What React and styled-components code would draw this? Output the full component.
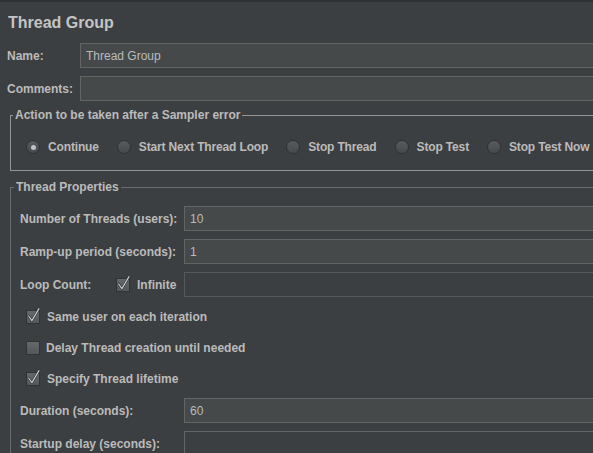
import React from "react";
import styled, { createGlobalStyle } from "styled-components";

const GlobalStyle = createGlobalStyle`
  html, body {
    margin: 0;
    padding: 0;
    background: #3c3f41;
    overflow: hidden;
  }
  body {
    font-family: "Liberation Sans", Arial, sans-serif;
    color: #bbbbbb;
  }
`;

const errorActions = [
  { label: "Continue", selected: true },
  { label: "Start Next Thread Loop" },
  { label: "Stop Thread" },
  { label: "Stop Test" },
  { label: "Stop Test Now" },
];

const CheckMark = () => (
  <CheckSvg width="16" height="18" viewBox="0 0 16 18">
    <path
      d="M2.6 10 L5.9 14.6 L13 2.6"
      fill="none"
      stroke="#2a2c2e"
      strokeWidth="2.2"
      strokeLinecap="round"
      strokeLinejoin="round"
    />
    <path
      d="M2.6 10 L5.9 14.6 L13 2.6"
      fill="none"
      stroke="#d4d4d4"
      strokeWidth="1.1"
      strokeLinecap="round"
      strokeLinejoin="round"
    />
  </CheckSvg>
);

const CheckBox = ({ checked }) => <Box>{checked && <CheckMark />}</Box>;

const App = () => {
  return (
    <>
      <GlobalStyle />
      <Page>
        <Title>Thread Group</Title>

        <TopForm>
          <Label>Name:</Label>
          <TextInput defaultValue="Thread Group" />
          <Label>Comments:</Label>
          <TextInput defaultValue="" />
        </TopForm>

        <Group $mt={7}>
          <Legend $ml={2}>Action to be taken after a Sampler error</Legend>
          <RadioRow>
            {errorActions.map((a) => (
              <RadioItem key={a.label}>
                <Radio $selected={a.selected} />
                <span>{a.label}</span>
              </RadioItem>
            ))}
          </RadioRow>
        </Group>

        <Group $mt={9} $border="#6b6d6f">
          <Legend $ml={3}>Thread Properties</Legend>
          <Props>
            <FieldRow>
              <Label>Number of Threads (users):</Label>
              <TextInput defaultValue="10" />
            </FieldRow>
            <FieldRow>
              <Label>Ramp-up period (seconds):</Label>
              <TextInput defaultValue="1" />
            </FieldRow>
            <FieldRow>
              <LoopCell>
                <Label>Loop Count:</Label>
                <CheckLabel $gap={7}>
                  <CheckBox checked />
                  <span>Infinite</span>
                </CheckLabel>
              </LoopCell>
              <TextInput disabled defaultValue="" />
            </FieldRow>
            <CheckRow>
              <CheckLabel>
                <CheckBox checked />
                <span>Same user on each iteration</span>
              </CheckLabel>
            </CheckRow>
            <CheckRow>
              <CheckLabel $gap={6}>
                <CheckBox />
                <span>Delay Thread creation until needed</span>
              </CheckLabel>
            </CheckRow>
            <CheckRow>
              <CheckLabel>
                <CheckBox checked />
                <span>Specify Thread lifetime</span>
              </CheckLabel>
            </CheckRow>
            <FieldRow>
              <Label>Duration (seconds):</Label>
              <TextInput defaultValue="60" />
            </FieldRow>
            <FieldRow>
              <Label>Startup delay (seconds):</Label>
              <TextInput $dim defaultValue="" />
            </FieldRow>
          </Props>
        </Group>
      </Page>
    </>
  );
};

export default App;

const Page = styled.div`
  width: 640px;
  height: 453px;
  box-sizing: border-box;
  border-top: 2px solid #2e3032;
  background: #3c3f41;
`;

const Title = styled.h1`
  margin: 0;
  padding: 11px 8px 0;
  font-size: 16px;
  line-height: 20px;
  font-weight: bold;
  color: #c4c4c4;
`;

const TopForm = styled.div`
  display: grid;
  grid-template-columns: 73px 1fr;
  grid-auto-rows: 25px;
  row-gap: 8px;
  padding: 10px 0 0 7px;
`;

const Label = styled.label`
  display: flex;
  align-items: center;
  font-size: 12px;
  font-weight: bold;
  color: #bbbbbb;
  white-space: nowrap;
`;

const TextInput = styled.input`
  box-sizing: border-box;
  height: 25px;
  width: 100%;
  margin: 0;
  padding: 0 5px;
  font-family: "Liberation Sans", Arial, sans-serif;
  font-size: 12px;
  color: #bbbbbb;
  background: ${(p) => (p.disabled || p.$dim ? "#3c3f41" : "#45494a")};
  border: 1px solid ${(p) => (p.disabled ? "#56595b" : "#646464")};
  outline: none;
`;

const Group = styled.fieldset`
  margin: ${(p) => p.$mt}px 0 0 10px;
  padding: 0;
  min-width: 0;
  border: 1px solid ${(p) => p.$border || "#949494"};
`;

const Legend = styled.legend`
  margin-left: ${(p) => p.$ml}px;
  padding: 0 2px;
  font-size: 12px;
  line-height: 14px;
  font-weight: bold;
  color: #bbbbbb;
`;

const RadioRow = styled.div`
  display: flex;
  align-items: center;
  gap: 18px;
  height: 14px;
  padding: 18px 0 16px 15px;
  font-size: 12px;
  font-weight: bold;
  letter-spacing: -0.15px;
  white-space: nowrap;
`;

const RadioItem = styled.div`
  display: flex;
  align-items: center;
  gap: 8px;
`;

const Radio = styled.span`
  position: relative;
  flex-shrink: 0;
  box-sizing: border-box;
  width: 14px;
  height: 14px;
  border-radius: 50%;
  border: 1px solid #2f3133;
  background: linear-gradient(#585b5d, #474a4c);

  &::after {
    content: "";
    display: ${(p) => (p.$selected ? "block" : "none")};
    position: absolute;
    left: 3.5px;
    top: 3.5px;
    width: 5px;
    height: 5px;
    border-radius: 50%;
    background: #c2c2c2;
  }
`;

const Props = styled.div`
  display: flex;
  flex-direction: column;
  gap: 8px;
  padding: 12px 0 0 9px;
`;

const FieldRow = styled.div`
  display: grid;
  grid-template-columns: 164px 1fr;
  height: 25px;
`;

const LoopCell = styled.div`
  display: grid;
  grid-template-columns: 96px auto;
  align-items: center;
`;

const CheckRow = styled.div`
  display: flex;
  align-items: center;
  height: 23px;
  padding-left: 6px;
`;

const CheckLabel = styled.div`
  display: flex;
  align-items: center;
  gap: ${(p) => p.$gap || 7}px;
  font-size: 12px;
  font-weight: bold;
  color: #bbbbbb;
  white-space: nowrap;
`;

const Box = styled.div`
  position: relative;
  flex-shrink: 0;
  box-sizing: border-box;
  width: 14px;
  height: 14px;
  border: 1px solid #303234;
  background-color: #5c5f61;
  background-image: linear-gradient(#65686a, #55585a);
`;

const CheckSvg = styled.svg`
  position: absolute;
  left: -1px;
  top: -5px;
  overflow: visible;
`;
